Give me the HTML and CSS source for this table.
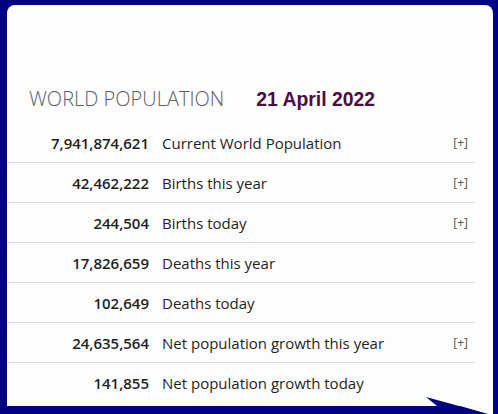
FILE: index.html
```html
<!DOCTYPE html>
<html>
<head>
<meta charset="utf-8">
<link rel="stylesheet" href="styles.css">
</head>
<body>
<div class="frame">
  <div class="panel">
    <div class="header">
      <span class="title">WORLD POPULATION</span>
      <span class="date">21 April 2022</span>
    </div>
    <div class="table">
      <div class="row"><span class="num">7,941,874,621</span><span class="label">Current World Population</span><span class="more">[+]</span></div>
      <div class="row"><span class="num">42,462,222</span><span class="label">Births this year</span><span class="more">[+]</span></div>
      <div class="row"><span class="num">244,504</span><span class="label">Births today</span><span class="more">[+]</span></div>
      <div class="row"><span class="num">17,826,659</span><span class="label">Deaths this year</span><span class="more"></span></div>
      <div class="row"><span class="num">102,649</span><span class="label">Deaths today</span><span class="more"></span></div>
      <div class="row"><span class="num">24,635,564</span><span class="label">Net population growth this year</span><span class="more">[+]</span></div>
      <div class="row last"><span class="num">141,855</span><span class="label">Net population growth today</span><span class="more"></span></div>
    </div>
    <svg class="tail" width="80" height="20" viewBox="0 0 80 20">
      <polygon points="41,11 74,11 74,20 71,20" fill="#fdfdfd"/>
      <polygon points="7,2 71,19.5 18,11" fill="#020280"/>
    </svg>
  </div>
</div>
</body>
</html>
```

FILE: styles.css
```css
html, body {
  margin: 0;
  padding: 0;
  background: #020280;
  width: 498px;
  height: 414px;
  overflow: hidden;
}
.frame {
  padding: 5px 5px 0 7px;
}
.panel {
  position: relative;
  width: 486px;
  height: 401px;
  background: #fdfdfd;
  border-radius: 8px 8px 0 0;
  font-family: "Open Sans", sans-serif;
}
.header {
  display: flex;
  align-items: baseline;
  padding: 82px 0 12px 22px;
  line-height: 24px;
}
.title {
  font-size: 20px;
  font-weight: 300;
  color: #606060;
}
.date {
  margin-left: 32px;
  font-family: "Liberation Sans", Arial, sans-serif;
  font-size: 19.4px;
  font-weight: 700;
  color: #4a0d42;
}
.table {
  width: 468px;
}
.row {
  display: grid;
  grid-template-columns: 142px 1fr auto;
  column-gap: 13px;
  align-items: center;
  height: 39px;
  border-bottom: 1px solid #dcdcdc;
  font-size: 15px;
  color: #1f1f1f;
}
.row.last {
  border-bottom: none;
}
.num {
  text-align: right;
  font-weight: 600;
}
.more {
  font-size: 12px;
  color: #555;
  padding-right: 7px;
}
.tail {
  position: absolute;
  left: 412px;
  top: 390px;
}
```
